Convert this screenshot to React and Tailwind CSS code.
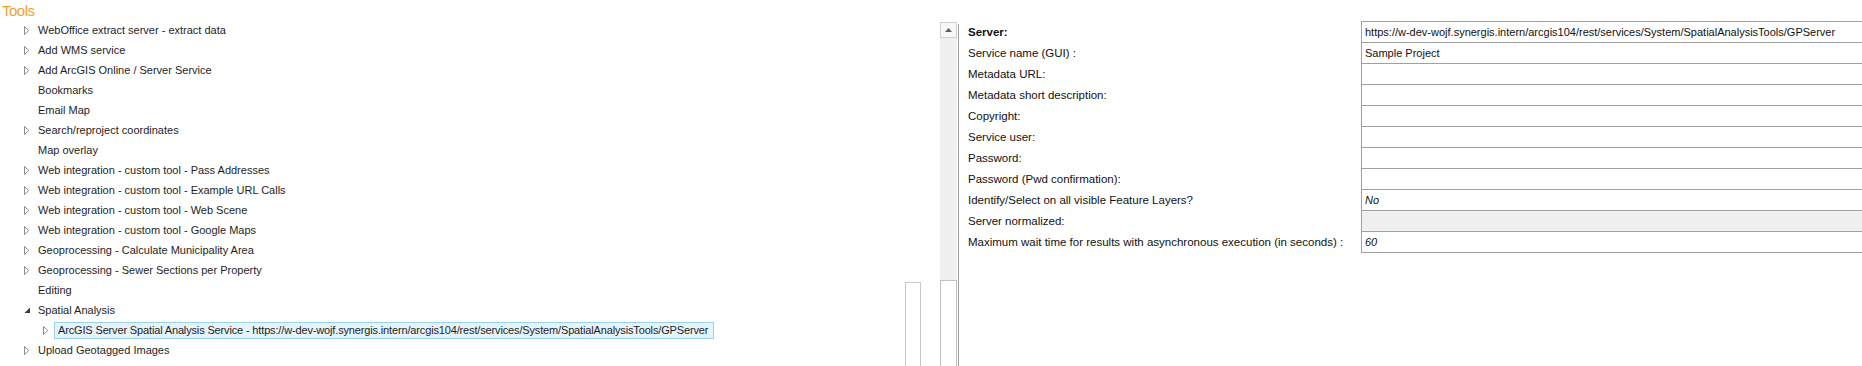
import React from "react";

const tree = [
  { text: "WebOffice extract server - extract data", arrow: "closed" },
  { text: "Add WMS service", arrow: "closed" },
  { text: "Add ArcGIS Online / Server Service", arrow: "closed" },
  { text: "Bookmarks" },
  { text: "Email Map" },
  { text: "Search/reproject coordinates", arrow: "closed" },
  { text: "Map overlay" },
  { text: "Web integration - custom tool - Pass Addresses", arrow: "closed" },
  { text: "Web integration - custom tool - Example URL Calls", arrow: "closed" },
  { text: "Web integration - custom tool - Web Scene", arrow: "closed" },
  { text: "Web integration - custom tool - Google Maps", arrow: "closed" },
  { text: "Geoprocessing - Calculate Municipality Area", arrow: "closed" },
  { text: "Geoprocessing - Sewer Sections per Property", arrow: "closed" },
  { text: "Editing" },
  { text: "Spatial Analysis", arrow: "open" },
  {
    text: "ArcGIS Server Spatial Analysis Service - https://w-dev-wojf.synergis.intern/arcgis104/rest/services/System/SpatialAnalysisTools/GPServer",
    arrow: "closed",
    level: 2,
    selected: true,
  },
  { text: "Upload Geotagged Images", arrow: "closed" },
  { text: "", arrow: "closed" },
];

const props = [
  { label: "Server:", value: "https://w-dev-wojf.synergis.intern/arcgis104/rest/services/System/SpatialAnalysisTools/GPServer", bold: true },
  { label: "Service name (GUI) :", value: "Sample Project" },
  { label: "Metadata URL:" },
  { label: "Metadata short description:" },
  { label: "Copyright:" },
  { label: "Service user:" },
  { label: "Password:" },
  { label: "Password (Pwd confirmation):" },
  { label: "Identify/Select on all visible Feature Layers?", value: "No", italic: true },
  { label: "Server normalized:", disabled: true },
  { label: "Maximum wait time for results with asynchronous execution (in seconds) :", value: "60", italic: true },
];

const Arrow = ({ kind }) => {
  if (kind === "open")
    return (
      <svg width="7" height="7" viewBox="0 0 7 7">
        <path d="M6 0.5 L6 6 L0.5 6 Z" fill="#404040" />
      </svg>
    );
  if (kind === "closed")
    return (
      <svg width="6" height="9" viewBox="0 0 6 9">
        <path d="M0.5 0.5 L4.8 4.5 L0.5 8.5 Z" fill="none" stroke="#8c8c8c" strokeWidth="1" />
      </svg>
    );
  return null;
};

const TreeRow = ({ item }) => {
  const lvl2 = item.level === 2;
  return (
    <div className={`h-[20px] flex-shrink-0 flex items-center ${lvl2 ? "pl-[43px]" : "pl-[24px]"}`}>
      <span className="w-[10px] flex-shrink-0 flex items-center">
        <Arrow kind={item.arrow} />
      </span>
      {lvl2 ? (
        <span className="ml-[1px] h-[17px] flex items-center pl-[3px] pr-[5px] bg-[#e5f3fb] border border-[#99d1ef] text-[#1e1e1e] whitespace-nowrap tracking-[-0.15px]">
          {item.text}
        </span>
      ) : (
        <span className="ml-[4px] text-[#1e1e1e] whitespace-nowrap">{item.text}</span>
      )}
    </div>
  );
};

export default function App() {
  return (
    <div className="w-[1862px] h-[366px] bg-white flex overflow-hidden font-['Liberation_Sans',Arial,sans-serif] text-[11px] leading-none">
      {/* Tool tree */}
      <div className="w-[940px] flex flex-shrink-0">
        <div className="w-[905px] flex flex-col">
          <div className="h-[20px] flex-shrink-0 pl-[2px] flex items-center text-[15px] tracking-[-0.5px] text-[#f0a030]">
            Tools
          </div>
          {tree.map((item, i) => (
            <TreeRow key={i} item={item} />
          ))}
        </div>
        <div className="w-[16px] flex flex-col">
          <div className="h-[282px] flex-shrink-0" />
          <div className="flex-1 border-l border-r border-t border-[#c8c8c8] bg-white" />
        </div>
      </div>

      {/* Property grid */}
      <div className="flex-1 flex">
        <div className="w-[17px] flex-shrink-0 flex flex-col pt-[22px]">
          <div className="h-[16px] flex-shrink-0 flex items-center justify-center border border-[#cfcfcf] bg-[#f7f7f7]">
            <svg width="7" height="4" viewBox="0 0 7 4">
              <path d="M3.5 0 L7 4 L0 4 Z" fill="#606060" />
            </svg>
          </div>
          <div className="h-[242px] flex-shrink-0 bg-[#f0f0f0]" />
          <div className="flex-1 border-l border-r border-t border-[#c0c0c0] bg-white" />
        </div>
        <div className="w-px ml-[1px] mt-[24px] bg-[#a0a0a0]" />
        <div className="flex-1 flex pl-[9px] pt-[21px]">
          <div className="flex-1 flex flex-col pt-[1px] text-[11.5px]">
            {props.map((p, i) => (
              <div
                key={i}
                className={`h-[21px] flex-shrink-0 flex items-center whitespace-nowrap text-[#111] ${p.bold ? "font-bold" : ""}`}
              >
                {p.label}
              </div>
            ))}
          </div>
          <div className="w-[501px] self-start border-t border-l border-[#a0a0a0] text-[11px]">
            {props.map((p, i) => (
              <div
                key={i}
                className={`h-[21px] border-b border-[#a0a0a0] flex items-center pl-[3px] whitespace-nowrap overflow-hidden text-[#111] ${
                  p.disabled ? "bg-[#f0f0f0]" : ""
                } ${p.italic ? "italic" : ""}`}
              >
                {p.value || ""}
              </div>
            ))}
          </div>
        </div>
      </div>
    </div>
  );
}
